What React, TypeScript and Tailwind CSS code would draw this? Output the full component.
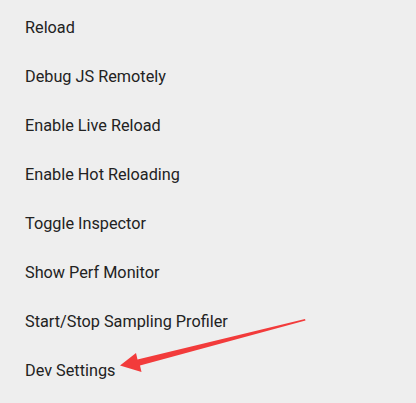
import React from "react";

const items = [
  "Reload",
  "Debug JS Remotely",
  "Enable Live Reload",
  "Enable Hot Reloading",
  "Toggle Inspector",
  "Show Perf Monitor",
  "Start/Stop Sampling Profiler",
  "Dev Settings",
];

export default function App() {
  return (
    <div
      className="relative w-[416px] h-[403px] bg-[#eeeeee] overflow-hidden"
      style={{ fontFamily: "Roboto, 'Noto Sans', sans-serif" }}
    >
      <ul className="flex flex-col pt-[3px]">
        {items.map((t) => (
          <li key={t} className="h-[49px] leading-[49px] pl-[25px] text-[16.25px] text-[#222222]">
            {t}
          </li>
        ))}
      </ul>
      <svg
        className="absolute left-0 top-0 pointer-events-none"
        width="416"
        height="403"
        viewBox="0 0 416 403"
      >
        <path
          d="M305 319 L305.5 320.5 L140 365.5 L141.5 372 L120 365.5 L136 353 L137.5 359.5 Z"
          fill="#f23b3b"
        />
      </svg>
    </div>
  );
}
